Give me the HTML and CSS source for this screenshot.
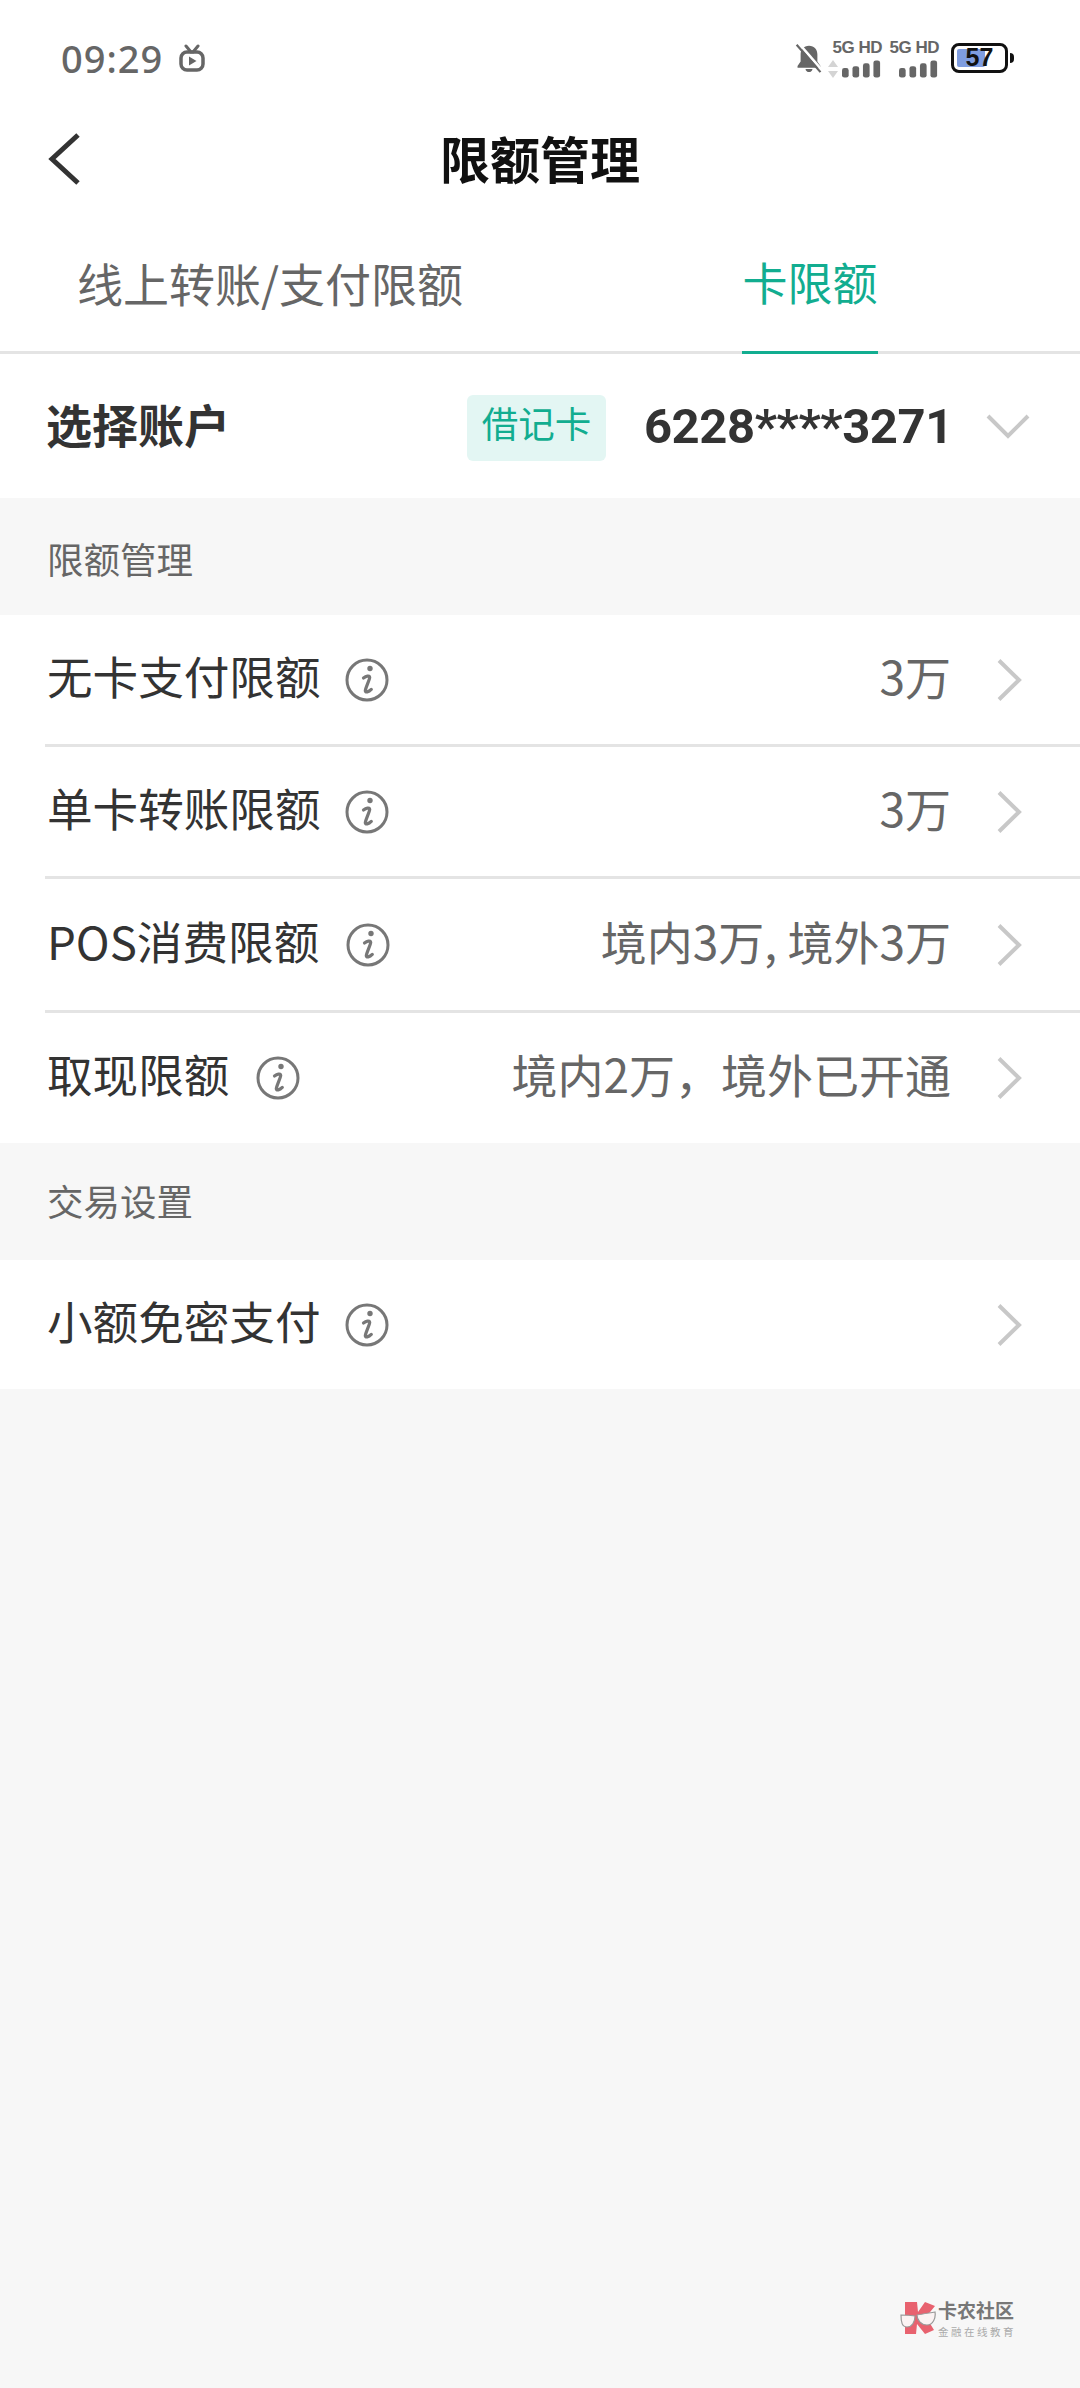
FILE: index.html
```html
<!DOCTYPE html>
<html lang="zh-CN">

<head>
    <meta charset="UTF-8">
    <meta name="viewport" content="width=device-width, initial-scale=1.0">
    <title>限额管理</title>
    <link rel="stylesheet" href="styles.css">
</head>

<body>
    <svg class="defs" width="0" height="0">
        <symbol id="info" viewBox="0 0 44 44">
            <circle cx="22" cy="22" r="20" fill="none" stroke="#777" stroke-width="3" />
            <circle cx="25" cy="10.500" r="2.700" fill="#777" />
            <path d="M18.500 20c2.500-2 6-3 6.200-.6.100 1.800-4.200 10.800-4.400 13.200-.2 2.400 3.400 1.400 6-1.200" fill="none" stroke="#777" stroke-width="3.200" stroke-linecap="round" />
        </symbol>
        <symbol id="arrow" viewBox="0 0 26 44">
            <path d="M3 2.500 23 22 3 41.500" fill="none" stroke="#c8c8c8" stroke-width="4" />
        </symbol>
        <symbol id="signal" viewBox="0 0 42 18">
            <rect x="0" y="8" width="7" height="10" rx="2.500" />
            <rect x="11" y="6" width="7" height="12" rx="2.500" />
            <rect x="22" y="3" width="7" height="15" rx="2.500" />
            <rect x="33" y="0" width="7" height="18" rx="2.500" />
        </symbol>
    </svg>

    <div class="status">
        <span class="time">09:29</span>
        <svg class="tv" width="26" height="28" viewBox="0 0 26 28">
            <path d="M7 2l5 6M19 2l-5 6" stroke="#666" stroke-width="3" stroke-linecap="round" />
            <rect x="2" y="8" width="22" height="18" rx="6" fill="none" stroke="#666" stroke-width="3.500" />
            <path d="M10 12.500l7.500 4.500-7.500 4.500z" fill="#666" />
        </svg>
        <div class="status-right">
            <svg class="bell" width="28" height="30" viewBox="0 0 30 34">
                <path d="M15 3c-6 0-9.500 4-9.500 10v8L2 26v2h26v-2l-3.500-5v-8C24.500 7 21 3 15 3z" fill="#666" />
                <path d="M11 29.500h8c-.5 2.500-2 3.500-4 3.500s-3.500-1-4-3.500z" fill="#666" />
                <path d="M3 0l27 31" stroke="#fff" stroke-width="3" />
                <path d="M1 2l27 31" stroke="#666" stroke-width="2.500" />
            </svg>
            <div class="sim">
                <span class="sim-text">5G HD</span>
                <div class="sim-bars">
                    <svg class="updown" width="10" height="18" viewBox="0 0 10 18">
                        <path d="M5 0l5 7H0zM5 18l5-7H0z" fill="#d4d4d4" />
                    </svg>
                    <svg class="bars" width="40" height="18"><use href="#signal" /></svg>
                </div>
            </div>
            <div class="sim">
                <span class="sim-text">5G HD</span>
                <div class="sim-bars">
                    <svg class="bars" width="40" height="18"><use href="#signal" /></svg>
                </div>
            </div>
            <div class="battery">
                <div class="battery-box">
                    <div class="battery-fill"></div>
                    <span class="battery-num">57</span>
                </div>
                <div class="battery-tip"></div>
            </div>
        </div>
    </div>

    <div class="nav">
        <svg class="back" width="34" height="52" viewBox="0 0 34 52">
            <path d="M31 2 5 26l26 24" fill="none" stroke="#333" stroke-width="5" />
        </svg>
        <h1 class="title">限额管理</h1>
    </div>

    <div class="tabs">
        <div class="tab"><span class="tab-text">线上转账/支付限额</span></div>
        <div class="tab"><span class="tab-text tab-on">卡限额</span></div>
    </div>

    <div class="account">
        <span class="account-label">选择账户</span>
        <span class="badge">借记卡</span>
        <span class="card-no">6228****3271</span>
        <svg class="down" width="44" height="26" viewBox="0 0 44 26">
            <path d="M2 3l20 20L42 3" fill="none" stroke="#c8c8c8" stroke-width="4" />
        </svg>
    </div>

    <div class="section section-first">限额管理</div>
    <div class="list">
        <div class="row">
            <span class="row-name">无卡支付限额</span>
            <svg class="info"><use href="#info" /></svg>
            <span class="row-value">3万</span>
            <svg class="arrow"><use href="#arrow" /></svg>
        </div>
        <div class="row">
            <span class="row-name">单卡转账限额</span>
            <svg class="info"><use href="#info" /></svg>
            <span class="row-value">3万</span>
            <svg class="arrow"><use href="#arrow" /></svg>
        </div>
        <div class="row row-tall">
            <span class="row-name">POS消费限额</span>
            <svg class="info info-far"><use href="#info" /></svg>
            <span class="row-value">境内3万, 境外3万</span>
            <svg class="arrow"><use href="#arrow" /></svg>
        </div>
        <div class="row row-last">
            <span class="row-name">取现限额</span>
            <svg class="info info-far"><use href="#info" /></svg>
            <span class="row-value">境内2万，境外已开通</span>
            <svg class="arrow"><use href="#arrow" /></svg>
        </div>
    </div>

    <div class="section">交易设置</div>
    <div class="list">
        <div class="row row-last row-short">
            <span class="row-name">小额免密支付</span>
            <svg class="info"><use href="#info" /></svg>
            <svg class="arrow arrow-only"><use href="#arrow" /></svg>
        </div>
    </div>

    <!-- 右下角水印 -->
    <div class="mark">
        <svg class="mark-logo" width="36" height="32" viewBox="0 0 36 32">
            <path d="M5 0h12l1 10 7-10 10 4-9 11 8 13-9 4-8-10-1 10H5z" fill="#e8626f" />
            <path d="M1 13c4 0 8 0 14 1 0 6-3 11-8 11S1 20 1 13zM17 13c5-1 12-2 18-3 1 6-2 13-8 13s-10-5-10-10z" fill="#fbf3f3" stroke="#999" stroke-width="1.200" />
        </svg>
        <div class="mark-text">
            <span class="mark-name">卡农社区</span>
            <span class="mark-sub">金融在线教育</span>
        </div>
    </div>
</body>

</html>
```

FILE: styles.css
```css
* {
    box-sizing: border-box;
}

body {
    position: relative;
    margin: 0;
    height: 2388px;
    overflow: hidden;
    background: #f7f7f7;
    font-family: "Noto Sans CJK SC", "Noto Sans", sans-serif;
    color: #333;
}

.defs {
    position: absolute;
}

/* 状态栏 */
.status {
    display: flex;
    align-items: center;
    height: 116px;
    padding: 0 66px 0 61px;
    background: #fff;
}

.time {
    font-family: "Noto Sans", sans-serif;
    font-size: 38px;
    font-weight: 500;
    letter-spacing: 1px;
    color: #666;
}

.tv {
    margin-left: 16px;
}

.status-right {
    display: flex;
    align-items: center;
    margin-left: auto;
}

.bell {
    margin-right: 11px;
}

.sim {
    display: flex;
    flex-direction: column;
    align-items: flex-end;
    width: 48px;
    margin-right: 9px;
}

.sim-text {
    font-family: "Liberation Sans", sans-serif;
    font-size: 17px;
    line-height: 19px;
    font-weight: bold;
    letter-spacing: -.5px;
    white-space: nowrap;
    color: #666;
}

.sim-bars {
    display: flex;
    align-items: center;
    gap: 4px;
    margin-top: 3px;
}

.bars {
    fill: #666;
}

.battery {
    display: flex;
    align-items: center;
    margin-left: 3px;
}

.battery-box {
    position: relative;
    width: 57px;
    height: 30px;
    padding: 3px;
    border: 3.5px solid #111;
    border-radius: 8px;
}

.battery-fill {
    width: 28px;
    height: 100%;
    background: #7f9de0;
    border-radius: 2px;
}

.battery-num {
    position: absolute;
    top: 0;
    left: 0;
    width: 100%;
    font-family: "Liberation Sans", sans-serif;
    font-size: 25px;
    line-height: 23px;
    font-weight: bold;
    text-align: center;
    color: #111;
}

.battery-tip {
    width: 4px;
    height: 10px;
    margin-left: 2px;
    background: #111;
    border-radius: 0 5px 5px 0;
}

/* 标题 */
.nav {
    display: flex;
    align-items: center;
    justify-content: center;
    position: relative;
    height: 90px;
    background: #fff;
}

.back {
    position: absolute;
    top: 17px;
    left: 47px;
}

.title {
    margin: 0 0 8px;
    font-size: 50px;
    font-weight: 700;
    color: #111;
}

/* 选项卡 */
.tabs {
    display: flex;
    height: 148px;
    border-bottom: 3px solid #e4e4e4;
    background: #fff;
}

.tab {
    display: flex;
    flex: 1;
    justify-content: center;
}

.tab-text {
    height: 148px;
    padding-top: 41px;
    font-size: 46px;
    line-height: 70px;
    color: #666;
}

.tab-on {
    font-size: 45px;
    border-bottom: 3px solid #12ad90;
    color: #12ad90;
}

/* 账户 */
.account {
    display: flex;
    align-items: center;
    height: 144px;
    padding: 0 50px 0 46px;
    background: #fff;
}

.account-label {
    margin-bottom: 6px;
    font-size: 46px;
    font-weight: 700;
}

.badge {
    margin: 4px 0 0 auto;
    width: 139px;
    height: 66px;
    font-size: 36.500px;
    line-height: 56px;
    text-align: center;
    color: #12ad90;
    background: #e3f6f3;
    border-radius: 6px;
}

.card-no {
    margin-left: 38px;
    font-family: Roboto, sans-serif;
    font-size: 49px;
    font-weight: 700;
    letter-spacing: -.4px;
}

.down {
    margin-left: 33px;
}

/* 列表 */
.section {
    height: 117px;
    padding: 33px 0 0 47px;
    font-size: 36.500px;
    line-height: 50px;
    color: #666;
}

.section-first {
    padding-top: 36px;
}

.list {
    background: #fff;
}

.row {
    display: flex;
    align-items: center;
    height: 132px;
    margin-left: 45px;
    padding: 0 58px 0 2px;
    border-bottom: 3px solid #e4e4e4;
}

.row-tall {
    height: 134px;
}

.row-last {
    height: 130px;
    border-bottom: 0;
}

.row-short {
    height: 129px;
}

.row-name {
    margin-bottom: 10px;
    font-size: 45.600px;
    color: #333;
}

.info {
    flex: none;
    width: 44px;
    height: 44px;
    margin-left: 24px;
}

.info-far {
    margin-left: 27px;
}

.row-value {
    margin: 0 0 10px auto;
    font-size: 46px;
    color: #666;
}

.arrow {
    flex: none;
    width: 26px;
    height: 44px;
    margin-left: 45px;
}

.arrow-only {
    margin-left: auto;
}

/* 水印 */
.mark {
    display: flex;
    align-items: flex-start;
    position: absolute;
    top: 2299px;
    left: 900px;
}

.mark-logo {
    margin-top: 3px;
}

.mark-text {
    display: flex;
    flex-direction: column;
    margin-left: 2px;
}

.mark-name {
    font-size: 19px;
    line-height: 21px;
    font-weight: 700;
    color: #777;
}

.mark-sub {
    margin-top: 4px;
    font-size: 10.500px;
    line-height: 15px;
    letter-spacing: 2.500px;
    color: #aaa;
}
```
